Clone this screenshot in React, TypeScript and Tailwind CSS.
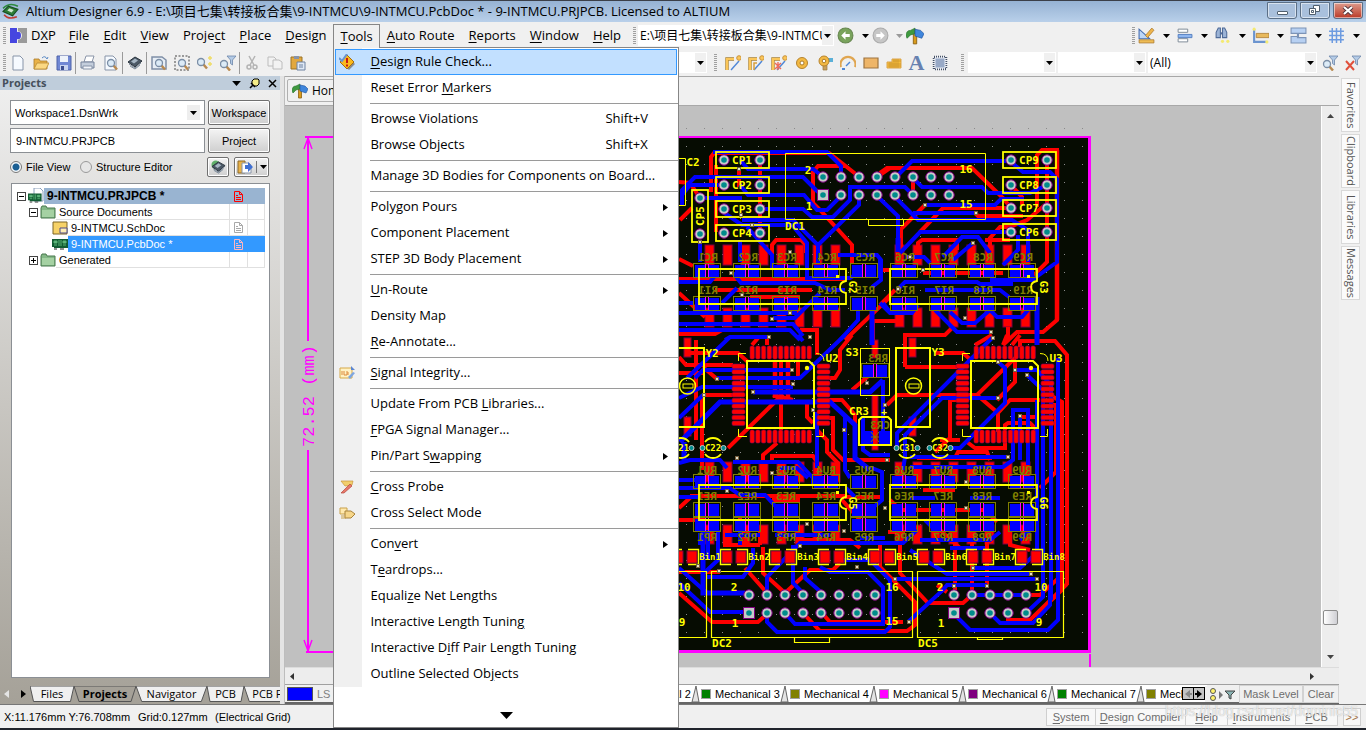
import type { ReactNode } from "react";

const UI = "font-['Open_Sans','Noto_Sans_CJK_SC',sans-serif]";
const SMALL = "font-['Liberation_Sans',Arial,sans-serif] text-[11px] leading-4";

/* ---------- small shared pieces ---------- */

// "&" marks the access key, as in the original menu resources
function Label({ text }: { text: string }) {
  const i = text.indexOf("&");
  if (i < 0) return <>{text}</>;
  return (
    <>
      {text.slice(0, i)}
      <span className="underline underline-offset-2">{text[i + 1]}</span>
      {text.slice(i + 2)}
    </>
  );
}

function Arrow({ className = "" }: { className?: string }) {
  return (
    <svg width="7" height="4" viewBox="0 0 7 4" className={className}>
      <path d="M0 0h7L3.500 4z" fill="currentColor" />
    </svg>
  );
}

function Grip() {
  return (
    <svg width="3" height="17" className="shrink-0">
      {[0, 2, 4, 6, 8, 10, 12, 14, 16].map((y) => (
        <rect key={y} y={y} width="3" height="1" fill="#a0a0a0" />
      ))}
    </svg>
  );
}

function Sep() {
  return <div className="h-[22px] w-px shrink-0 bg-[#9a9a9a]" />;
}

function Icon({ size = 16, children }: { size?: number; children: ReactNode }) {
  return (
    <svg width={size} height={size} viewBox="0 0 16 16" className="shrink-0">
      {children}
    </svg>
  );
}

function ToolButton({ label, wide, children }: { label: string; wide?: boolean; children: ReactNode }) {
  return (
    <button
      type="button"
      aria-label={label}
      className={`flex h-6 shrink-0 items-center justify-center ${wide ? "w-[38px] gap-[8px]" : "w-[23px]"}`}
    >
      {children}
      {wide && <Arrow className="text-black" />}
    </button>
  );
}

function Combo({ label, value, className }: { label: string; value: string; className: string }) {
  return (
    <div className={`relative flex h-[21px] shrink-0 bg-white ${className}`}>
      <select aria-label={label} className="w-full appearance-none bg-transparent px-[2px] text-xs outline-none">
        <option>{value}</option>
      </select>
      <span className="pointer-events-none absolute inset-y-px right-px flex w-[11px] items-center justify-center bg-[#f0f0f0]">
        <Arrow className="text-black" />
      </span>
    </div>
  );
}

/* ---------- icons ---------- */

const lens = (
  <>
    <path d="M10 10l4 4.500" stroke="#b98a50" strokeWidth="2.500" />
    <circle cx="8" cy="8" r="3.500" fill="#dcebf7" stroke="#7b8ea6" strokeWidth="1.300" />
  </>
);
const funnel = <path d="M7 1h9l-3.500 4v5l-2 -1.500V5z" fill="#b4cbe6" stroke="#6c87aa" strokeWidth=".8" />;
const chip = (
  <>
    <path d="M1 7l7-5 7 4-7 6z" fill="#4c5966" stroke="#28323c" />
    <path d="M4 6.500l4-3 3 2-4 3z" fill="#a7b6c4" />
    <path d="M2 9l6 4 6-5M3 11l5 3 5-4" fill="none" stroke="#7c8a99" />
  </>
);
const tree = (
  <>
    <path d="M6.500 5h3v10h-3z" fill="#d99b1c" stroke="#8a6112" strokeWidth=".8" />
    <path d="M0 8q0-5 4-5l4-2v5l-4 1-3 3z" fill="#3f9a3f" stroke="#27702b" strokeWidth=".6" />
    <path d="M8 2l5 1 3 3-2 4-6-2z" fill="#3f86dc" stroke="#1f529c" strokeWidth=".6" />
  </>
);
const track = (
  <>
    <path d="M2 15V4h7" fill="none" stroke="#a98336" strokeWidth="3.400" />
    <path d="M2 15V4h7" fill="none" stroke="#fbc659" strokeWidth="2.200" />
    <path d="M6 15l8-9" stroke="#4e86d6" strokeWidth="1.400" />
    <circle cx="14" cy="3" r="2.300" fill="#fbc659" stroke="#c8923b" />
  </>
);
const board = (
  <>
    <path d="M0 3h16v9H2v-1H0z" fill="#125c33" />
    <path d="M2 5h3v2H2zM7 4v6M9 4v6M11 5h3v2h-3zM2 9h3M11 9h3" fill="#66ba82" stroke="#58b276" />
    <path d="M2 13h3M8 13h4" stroke="#222" />
  </>
);
const folder = (
  <>
    <path d="M1 4l1-2h4l1 2h8v10H1z" fill="#84b886" stroke="#49784e" />
    <path d="M2 6h12v7H2z" fill="#a5d1a3" />
  </>
);

const fileTools: (["sep"] | [string, ReactNode])[] = [
  ["New", <path key="n" d="M3 1h7l3 3v11H3z" fill="#f6faff" stroke="#8794a8" />],
  ["Open", <g key="o"><path d="M1 14V4h5l1 2h7v8z" fill="#e9b248" stroke="#a87a2a" strokeWidth=".8" /><path d="M1 14l3-6h12l-3 6z" fill="#fbd882" stroke="#b98b35" strokeWidth=".8" /><path d="M9 3q3-3 5 1l1-2" fill="none" stroke="#5787c4" /></g>],
  ["Save", <g key="s"><path d="M1 1h14v14H1z" fill="#7188d4" stroke="#4f63a8" /><path d="M4 1h8v6H4z" fill="#eef3fb" /><path d="M4 10h8v5H4z" fill="#c9d4ef" /><path d="M5 11h3v4H5z" fill="#3c4e90" /></g>],
  ["sep"],
  ["Print", <g key="p"><path d="M4 7l2-6h8l-2 6z" fill="#fff" stroke="#8a95a8" /><path d="M1 7h13v6H1z" fill="#c4cedc" stroke="#75829a" /><path d="M3 11h9v3H3z" fill="#f2f5fa" stroke="#8794a8" /></g>],
  ["Print Preview", <g key="v"><path d="M2 1h8l3 3v11H2z" fill="#f6faff" stroke="#8794a8" />{lens}</g>],
  ["sep"],
  ["Devices", <g key="d">{chip}</g>],
  ["sep"],
  ["Fit Document", <g key="f"><path d="M1 2h10l4 3v9H1z" fill="#e7eef6" stroke="#7f8fa6" strokeWidth="1.500" />{lens}</g>],
  ["Fit Area", <g key="a"><path d="M1 1h14v14H1z" fill="none" stroke="#444" strokeDasharray="2 1.500" />{lens}</g>],
  ["Zoom Selected", <g key="z"><g transform="translate(-4 -1)">{lens}</g><path d="M13 1v4M11 3h4M13 7v4M11 9h4" stroke="#eedc67" strokeWidth="1.500" /></g>],
  ["Zoom Filtered", <g key="y"><g transform="translate(-4 1)">{lens}</g>{funnel}</g>],
  ["sep"],
  ["Cut", <g key="c" fill="none" stroke="#b3b3b3" strokeWidth="1.500"><path d="M5 1l5 9M11 1L6 10" /><circle cx="5" cy="12" r="2" /><circle cx="11" cy="12" r="2" /></g>],
  ["Copy", <g key="k" fill="#f2f2f2" stroke="#bcbcbc"><path d="M1 2h6l2 2v7H1z" /><path d="M6 5h6l3 2v7H6z" /></g>],
  ["Paste", <g key="q"><path d="M1 2h11v12H1z" fill="#e2a83e" stroke="#9a7327" /><path d="M4 1h5v3H4z" fill="#8793a8" /><path d="M7 7h8v8H7z" fill="#dfe9f6" stroke="#6f82a0" /><path d="M9 10h4M9 12h4" stroke="#6f82a0" /></g>],
];

const placeTools: [string, ReactNode][] = [
  ["Route", track],
  ["Route Differential", <g key="r">{track}<path d="M6 15V8h3" fill="none" stroke="#d99e3a" strokeWidth="1.500" /></g>],
  ["Route Multiple", <g key="m">{track}<path d="M4 8l6 6M10 8l-6 6M7 7v8" stroke="#ee6b5b" strokeWidth="1.400" /></g>],
  ["Pad", <g key="p"><circle cx="8" cy="8" r="5.500" fill="#f4b942" stroke="#b5832d" /><circle cx="8" cy="8" r="2" fill="#fff" stroke="#a87a2a" /></g>],
  ["Via", <g key="v"><path d="M6 8h4v7H6z" fill="#c9a05c" stroke="#9c7a3e" strokeWidth=".7" /><path d="M10 3h6v4h-6z" fill="#5bb0d8" /><circle cx="7" cy="6" r="5" fill="#f4b942" stroke="#b5832d" /><circle cx="7" cy="6" r="1.800" fill="#fff" stroke="#a87a2a" /></g>],
  ["Arc", <g key="a"><path d="M1 12A7.500 7.500 0 1 1 15 12" fill="none" stroke="#e0a651" strokeWidth="2.200" /><path d="M6 11l4-4" stroke="#4e86d6" strokeWidth="1.400" /><path d="M2 14h3" stroke="#4e86d6" strokeWidth="2" /></g>],
  ["Fill", <path key="f" d="M1 3h14v10H1z" fill="#eeb568" stroke="#9e7440" strokeWidth="1.200" />],
  ["Polygon", <g key="g"><path d="M1 13V7h5V4h9v9z" fill="#f7bd3c" stroke="#dca54b" /><path d="M2 9h13M2 11h13M7 6h8M4 7v6M6 7v6M8 4v9M10 4v9M12 4v9" stroke="#c58d2d" strokeWidth=".6" /></g>],
];

const placeEnd: [string, ReactNode][] = [
  ["Component", <g key="c"><path d="M2 2h12v12H2z" fill="none" stroke="#445168" strokeWidth="2.500" strokeDasharray="1 1" /><path d="M3 3h10v10H3z" fill="#98a9c6" stroke="#e7ecf5" /></g>],
];

const rightTools: [string, ReactNode][] = [
  ["Utilities", <g key="u"><path d="M1 2v9h10z" fill="#bcd6f8" stroke="#426bb0" /><path d="M7 8l6-7 2 2-6 7z" fill="#efb54b" stroke="#a8772c" strokeWidth=".7" /><path d="M1 12h14v3H1z" fill="#eebc55" stroke="#a8772c" strokeWidth=".7" /></g>],
  ["Align", <g key="a" strokeWidth=".9" stroke="#7b8794"><path d="M2 2h9v3H2zM2 11h9v3H2z" fill="#fff" /><path d="M2 7h13v3H2z" fill="#8fb6ef" stroke="#5580c0" /></g>],
  ["Find", <g key="f"><path d="M2 10V5l2-4h2v9zM8 10V1h2l2 4v5z" fill="#9bb3d6" stroke="#4f6b98" /><path d="M6 5h2v2H6z" fill="#4f6b98" /><circle cx="8" cy="13.500" r="1.500" fill="#f4ea72" /><circle cx="13" cy="13.500" r="1.500" fill="#f4ea72" /></g>],
  ["Dimension", <g key="d"><path d="M2 2v12h11" fill="none" stroke="#6b94cf" strokeWidth="2" /><path d="M4 6h12v4H4z" fill="#e8b95c" stroke="#a8772c" strokeWidth=".7" /><circle cx="2" cy="2" r="1.500" fill="#f4ea72" /><circle cx="14" cy="14" r="1.500" fill="#f4ea72" /></g>],
  ["Room", <path key="r" d="M1 1h14v5H7v4h8v5H1V9h7V6H1z" fill="#b7d0f2" stroke="#7c93b6" />],
  ["Grid", <path key="g" d="M4 1v14M8 1v14M12 1v14M1 4h14M1 8h14M1 12h14" stroke="#6d9be0" strokeWidth="1.400" />],
];

const filterIcon = (
  <>
    <g transform="translate(-3 1)">{lens}</g>
    {funnel}
  </>
);

/* ---------- Tools menu ---------- */

type Entry = "-" | { text: string; key?: string; sub?: boolean; icon?: ReactNode; on?: boolean };

const toolsMenu: Entry[] = [
  {
    text: "&Design Rule Check...",
    on: true,
    icon: (
      <>
        <path d="M9 3l7 7-6 6-6-6z" fill="#8b8b8b" />
        <path d="M8 1l7 7-7 7-7-7z" fill="#fbb91b" stroke="#a56e12" />
        <path d="M0 4l3 3 5-7" fill="none" stroke="#6893d2" strokeWidth="2" />
        <path d="M8 4v5M8 10.500v2" stroke="#c51c14" strokeWidth="2" />
      </>
    ),
  },
  { text: "Reset Error &Markers" },
  "-",
  { text: "Browse Violations", key: "Shift+V" },
  { text: "Browse Objects", key: "Shift+X" },
  "-",
  { text: "Manage 3D Bodies for Components on Board..." },
  "-",
  { text: "Polygon Pours", sub: true },
  { text: "Component Placement", sub: true },
  { text: "STEP 3D Body Placement", sub: true },
  "-",
  { text: "&Un-Route", sub: true },
  { text: "Density Map" },
  { text: "&Re-Annotate..." },
  "-",
  {
    text: "&Signal Integrity...",
    icon: (
      <>
        <path d="M1 3h12v10H1z" fill="#fff1c4" stroke="#d6a948" />
        <path d="M3 6v4M5 6v4h3V6M9 10V7" stroke="#dd8a3c" fill="none" />
        <path d="M9 12l5-5 2 1-5 6z" fill="#7ea6e0" />
        <path d="M12 1l4 4h-4z" fill="#5b86d0" />
      </>
    ),
  },
  "-",
  { text: "Update From PCB &Libraries..." },
  { text: "&FPGA Signal Manager..." },
  { text: "Pin/Part S&wapping", sub: true },
  "-",
  {
    text: "&Cross Probe",
    icon: (
      <>
        <path d="M2 2h5l7 0-1 4-7 1z" fill="#f2cf6d" stroke="#c9963c" strokeWidth=".7" />
        <path d="M2 14l9-9 2 2-8 7z" fill="#e8796a" stroke="#b5483d" strokeWidth=".7" />
      </>
    ),
  },
  {
    text: "Cross Select Mode",
    icon: (
      <>
        <path d="M1 3h7v6H1z" fill="#ffe9ae" stroke="#c9a14b" />
        <path d="M6 6h6l4 3-4 4H6z" fill="#f6d68a" stroke="#a8823a" />
        <path d="M2 11h4M2 13h5" stroke="#c9a14b" />
      </>
    ),
  },
  "-",
  { text: "Con&vert", sub: true },
  { text: "T&eardrops..." },
  { text: "Equali&ze Net Lengths" },
  { text: "Interactive Length Tunin&g" },
  { text: "Interactive D&iff Pair Length Tuning" },
  { text: "Outline Selected Ob&jects" },
];

function ToolsMenu() {
  return (
    <div
      role="menu"
      className="absolute left-0 top-full z-20 flex w-[346px] flex-col border border-[#868686] bg-[linear-gradient(90deg,#f0f0f0_28px,#fff_28px)] pt-px"
    >
      {toolsMenu.map((e, i) =>
        e === "-" ? (
          <div key={i} role="separator" className="flex h-[5px] items-center pl-9">
            <div className="h-px w-full bg-[#9a9a9a]" />
          </div>
        ) : (
          <button
            key={i}
            type="button"
            role="menuitem"
            className={`mx-px flex h-[26px] items-center border pr-1 text-left ${
              e.on ? "border-[#3399ff] bg-[#c2e0ff]" : "border-transparent"
            }`}
          >
            <span className="flex w-[34px] pl-[3px]">{e.icon && <Icon>{e.icon}</Icon>}</span>
            <span className="flex-1 whitespace-nowrap">
              <Label text={e.text} />
            </span>
            {e.key && <span className="w-[67px]">{e.key}</span>}
            {e.sub && (
              <svg width="5" height="7" className="mr-1">
                <path d="M0 0v7l5-3.500z" />
              </svg>
            )}
          </button>
        ),
      )}
      <div className="flex h-10 items-center justify-center bg-white pt-4">
        <svg width="13" height="7">
          <path d="M0 0h13L6.500 7z" />
        </svg>
      </div>
    </div>
  );
}

/* ---------- header ---------- */

function TitleBar() {
  const frame = "flex h-[17px] w-[30px] items-center justify-center rounded-b-[3px] border border-[#5b6f86] shadow-[inset_0_0_0_1px_#ffffff88]";
  return (
    <header className="flex h-[22px] items-center border-t border-[#3b3f48] bg-linear-to-b from-[#96b2d3] to-[#b9d0ea] pl-[2px] pr-[3px]">
      <Icon size={17}>
        <path d="M1 5q6-6 14-2" fill="none" stroke="#2c8a3e" strokeWidth="1.500" />
        <path d="M1 8l5-5 9 3-5 6z" fill="#2d7d36" stroke="#174d20" />
        <path d="M5 7l2-2 4 1.500-2 2.500z" fill="#cfe6cf" />
        <path d="M2 11q4 5 12 2" fill="none" stroke="#c23a32" strokeWidth="1.500" />
      </Icon>
      <h1 className="ml-[7px] flex-1 whitespace-nowrap text-[13px]">
        Altium Designer 6.9 - E:\项目七集\转接板合集\9-INTMCU\9-INTMCU.PcbDoc * - 9-INTMCU.PRJPCB. Licensed to ALTIUM
      </h1>
      <div className="flex gap-[3px] self-start pt-px">
        <button type="button" aria-label="Minimize" className={`${frame} bg-[#a9c0dc]`}>
          <span className="mt-1 h-1 w-[11px] rounded-[1px] border border-[#51606f] bg-white" />
        </button>
        <button type="button" aria-label="Restore" className={`${frame} bg-[#a9c0dc]`}>
          <svg width="12" height="11" fill="#fff" stroke="#51606f">
            <path d="M4.500.5h6v6h-6z" />
            <path d="M.5 3.500h6v6h-6z" />
            <path d="M2.500 5.500h2v2h-2z" />
          </svg>
        </button>
        <button type="button" aria-label="Close" className={`${frame} bg-linear-to-b from-[#dd9a8c] to-[#b93524]`}>
          <svg width="12" height="9">
            <path d="M2 1l8 7M10 1L2 8" stroke="#51343a" strokeWidth="4" />
            <path d="M2 1l8 7M10 1L2 8" stroke="#fff" strokeWidth="2.200" />
          </svg>
        </button>
      </div>
    </header>
  );
}

const menusLeft = ["&File", "&Edit", "&View", "Proje&ct", "&Place", "&Design"];
const menusRight = ["&Auto Route", "&Reports", "&Window", "&Help"];

function MenuBar() {
  return (
    <nav className="flex h-[27px] items-center bg-[#f0f0f0] pl-[3px] text-[13px]">
      <Grip />
      <svg width="17" height="15" className="ml-1 shrink-0">
        <path d="M0 0h7v4q4-1 4 3.500T7 11v4H0z" fill="#4646e0" />
        <path d="M8 0h9v15H8v-3q4-1 4-4.500T8 3z" fill="#9a9a9a" />
      </svg>
      <button type="button" className="pl-1 pr-[6px]">
        <Label text="D&XP" />
      </button>
      {menusLeft.map((m) => (
        <button key={m} type="button" className="px-[7px]">
          <Label text={m} />
        </button>
      ))}
      <div className="relative mt-[2px] h-[23px] self-start">
        <button type="button" aria-haspopup="menu" aria-expanded="true" className="relative z-30 h-6 border border-b-0 border-[#868686] bg-[#f0f0f0] px-[6px]">
          <Label text="&Tools" />
        </button>
        <ToolsMenu />
      </div>
      {menusRight.map((m) => (
        <button key={m} type="button" className="px-[7px]">
          <Label text={m} />
        </button>
      ))}
      <div className="ml-[5px]">
        <Grip />
      </div>
      <div className="ml-[2px] flex h-[21px] w-[196px] shrink-0 bg-white">
        <input aria-label="Address" readOnly value="E:\项目七集\转接板合集\9-INTMCU\9-INTMCU.PcbDoc" className="min-w-0 flex-1 bg-transparent pl-[2px] text-xs outline-none" />
        <button type="button" aria-label="Recent locations" className="my-px mr-px flex w-[11px] items-center justify-center bg-[#f0f0f0]">
          <Arrow />
        </button>
      </div>
      <ToolButton label="Back" wide>
        <Icon size={17}>
          <circle cx="8" cy="8" r="7" fill="#79a35c" stroke="#66864f" />
          <path d="M4 8l4-4v2.500h4v3H8V12z" fill="#fff" />
        </Icon>
      </ToolButton>
      <button type="button" aria-label="Forward" className="flex w-[31px] items-center gap-[7px] text-[#999]">
        <Icon size={17}>
          <circle cx="8" cy="8" r="7" fill="#c6c6c6" stroke="#aaa" />
          <path d="M12 8L8 4v2.500H4v3h4V12z" fill="#fff" />
        </Icon>
        <Arrow />
      </button>
      <ToolButton label="Home">
        <Icon size={18}>{tree}</Icon>
      </ToolButton>
      <div className="ml-auto flex items-center pr-[3px]">
        <Grip />
        {rightTools.map(([name, art]) => (
          <ToolButton key={name} label={name} wide>
            <Icon size={17}>{art}</Icon>
          </ToolButton>
        ))}
      </div>
    </nav>
  );
}

function ToolBar() {
  return (
    <div className="flex h-[27px] items-center bg-[#f0f0f0] pl-[3px] pr-[2px]">
      <div className="flex w-[704px] shrink-0 items-center">
        <Grip />
        {fileTools.map((t, i) =>
          t[0] === "sep" ? (
            <Sep key={i} />
          ) : (
            <ToolButton key={i} label={t[0]}>
              <Icon>{t[1]}</Icon>
            </ToolButton>
          ),
        )}
        <Combo label="View configuration" value="" className="ml-auto w-[180px]" />
      </div>
      <div className="ml-[7px] mr-1">
        <Grip />
      </div>
      {placeTools.map(([name, art]) => (
        <ToolButton key={name} label={name}>
          <Icon>{art}</Icon>
        </ToolButton>
      ))}
      <button type="button" aria-label="String" className="w-[23px] shrink-0 font-['Liberation_Serif',serif] text-[22px] font-bold leading-6 text-[#6781b0]">
        A
      </button>
      {placeEnd.map(([name, art]) => (
        <ToolButton key={name} label={name}>
          <Icon>{art}</Icon>
        </ToolButton>
      ))}
      <div className="ml-[10px] mr-1">
        <Grip />
      </div>
      <div className="flex min-w-0 flex-1 gap-[2px]">
        <Combo label="Filter net" value="" className="w-[88px]" />
        <Combo label="Filter component" value="" className="w-[88px]" />
        <Combo label="Filter" value="(All)" className="w-[169px]" />
      </div>
      <ToolButton label="Apply filter">
        <Icon>{filterIcon}</Icon>
      </ToolButton>
      <ToolButton label="Clear filter">
        <Icon>
          {funnel}
          <path d="M1 6l8 9M9 6l-8 9" stroke="#e0503c" strokeWidth="2" />
        </Icon>
      </ToolButton>
    </div>
  );
}

/* ---------- projects panel ---------- */

function DocMark({ color }: { color: string }) {
  return (
    <svg width="9" height="11" fill="none" stroke={color}>
      <path d="M.5.500h5l3 3v7h-8zM5.500.500v3h3M2 4.500h2M2 6.500h5M2 8.500h5" />
    </svg>
  );
}

type Row = { text: string; indent: string; icon: ReactNode; box?: "+" | "-"; mark?: string; tone?: string };

const rows: Row[] = [
  {
    text: "9-INTMCU.PRJPCB *",
    indent: "pl-[5px]",
    box: "-",
    icon: (
      <>
        <path d="M6 0h6l3 3v10H6z" fill="#fff" stroke="#8ba0bc" />
        <g transform="translate(0 3) scale(.85)">{board}</g>
      </>
    ),
    mark: "#ff0000",
    tone: "bg-[#99b4d1] font-bold",
  },
  { text: "Source Documents", indent: "pl-[17px]", box: "-", icon: folder },
  {
    text: "9-INTMCU.SchDoc",
    indent: "pl-10",
    icon: (
      <>
        <path d="M1 2h14v12H1z" fill="#f7d268" stroke="#7d6526" />
        <path d="M8 8h7v5H8z" fill="#ffedb4" stroke="#4d4a8d" />
      </>
    ),
    mark: "#a8a8a8",
  },
  { text: "9-INTMCU.PcbDoc *", indent: "pl-10", icon: board, mark: "#ffb4bc", tone: "bg-[#3399ff] text-white" },
  { text: "Generated", indent: "pl-[17px]", box: "+", icon: folder },
];

function ProjectTree() {
  return (
    <ul role="tree" aria-label="Projects" className="flex-1 border border-[#8b8f94] bg-white pr-1 pt-1">
      {rows.map((r) => (
        <li key={r.text} role="treeitem" className={`flex h-4 items-center ${r.indent}`}>
          {r.box && (
            <span className="mr-[2px] flex h-[9px] w-[9px] shrink-0 items-center justify-center border border-[#444]">
              <svg width="5" height="5">
                <path d={r.box === "+" ? "M0 2.500h5M2.500 0v5" : "M0 2.500h5"} stroke="#000" />
              </svg>
            </span>
          )}
          <Icon>{r.icon}</Icon>
          <span className={`flex h-4 min-w-0 flex-1 items-center ${r.tone ?? "border-b border-[#e0e0e0]"}`}>
            <span className={`flex-1 whitespace-nowrap pl-[3px] ${r.text.endsWith("PRJPCB *") ? "text-xs" : ""}`}>{r.text}</span>
            <span className={`flex h-4 w-[18px] items-center justify-center ${r.tone ? "" : "border-l border-[#e0e0e0]"}`}>
              {r.mark && <DocMark color={r.mark} />}
            </span>
            <span className={`h-4 w-[18px] ${r.tone ? "" : "border-x border-[#e0e0e0]"}`} />
          </span>
        </li>
      ))}
    </ul>
  );
}

const panelTabs = [
  { text: "Files", width: "w-[44px]" },
  { text: "Projects", width: "w-[62px]" },
  { text: "Navigator", width: "w-[71px]" },
  { text: "PCB", width: "w-[37px]" },
  { text: "PCB Filter", width: "w-[66px]" },
];

function ProjectsPanel() {
  const button = "rounded-[2px] border border-[#707070] bg-linear-to-b from-[#f4f4f4] to-[#cfcfcf] shadow-[inset_0_0_0_1px_#fff]";
  return (
    <aside className={`flex w-[280px] shrink-0 flex-col bg-linear-to-b from-[#f0f0f0] to-[#a5a198] ${SMALL}`}>
      <div className="flex h-[14px] items-center bg-[#bfcddb] pl-[2px] pr-[3px]">
        <h2 className={`flex-1 text-[11px] font-bold text-[#46505c] ${UI}`}>Projects</h2>
        <button type="button" aria-label="Panel menu" className="mr-2">
          <Arrow className="h-[5px] w-[9px]" />
        </button>
        <button type="button" aria-label="Pin" className="mr-2">
          <svg width="11" height="11">
            <path d="M5 1h4l1 1v4L8 8H5L3 6V3z" fill="#f4ec88" stroke="#000" />
            <path d="M4 7L1 10M2 5l4 4" stroke="#000" strokeWidth="1.500" />
          </svg>
        </button>
        <button type="button" aria-label="Close panel">
          <svg width="9" height="9">
            <path d="M1 1l7 7M8 1L1 8" stroke="#000" strokeWidth="1.500" />
          </svg>
        </button>
      </div>
      <div className="flex flex-1 flex-col px-[10px] pb-2 pt-[10px]">
        <div className="flex gap-[3px]">
          <div className="relative flex h-[25px] w-[195px] border border-[#8b8f94] bg-white">
            <select aria-label="Workspace" className="w-full appearance-none bg-transparent px-1 text-[11px] outline-none">
              <option>Workspace1.DsnWrk</option>
            </select>
            <span className="pointer-events-none absolute inset-y-1 right-1 flex w-[13px] items-center justify-center bg-[#eee]">
              <Arrow />
            </span>
          </div>
          <button type="button" className={`h-[25px] w-[62px] ${button}`}>
            Workspace
          </button>
        </div>
        <div className="mt-[3px] flex gap-[3px]">
          <input aria-label="Project file" readOnly value="9-INTMCU.PRJPCB" className="h-[25px] w-[195px] border border-[#8b8f94] bg-white px-[5px] outline-none" />
          <button type="button" className={`h-[25px] w-[62px] ${button}`}>
            Project
          </button>
        </div>
        <div className="mt-1 flex h-5 items-center">
          <label className="flex w-[70px] items-center gap-1">
            <input type="radio" name="view" defaultChecked className="h-3 w-3 appearance-none rounded-full border border-[#777] bg-white bg-[radial-gradient(circle,#1a5f94_0_3px,#f4f8fb_4px)]" />
            File View
          </label>
          <label className="flex items-center gap-1">
            <input type="radio" name="view" className="h-3 w-3 appearance-none rounded-full border border-[#999] bg-[#e6e6e6]" />
            Structure Editor
          </label>
          <button type="button" aria-label="Refresh" className={`ml-auto flex h-5 w-[22px] items-center justify-center ${button}`}>
            <Icon size={15}>
              <circle cx="5" cy="5" r="4.500" fill="#5fae6a" />
              {chip}
            </Icon>
          </button>
          <button type="button" aria-label="Open project documents" className={`ml-[5px] mr-px flex h-5 w-[35px] items-center gap-[3px] pl-[2px] ${button}`}>
            <Icon>
              <path d="M1 2h7v12H1z" fill="#e9b248" stroke="#8d6a2a" />
              <path d="M5 4h7l2 2v8H5z" fill="#fff" stroke="#8794a8" />
              <path d="M8 6h3V3l5 5-5 5v-3H8z" fill="#3f70d4" />
            </Icon>
            <span className="h-3 w-px bg-[#777]" />
            <Arrow />
          </button>
        </div>
        <div className="mt-[6px] flex flex-1 flex-col pl-px">
          <ProjectTree />
        </div>
      </div>
      <div className={`flex h-[18px] items-start ${UI}`}>
        <div className="flex w-[30px] shrink-0 items-center justify-between px-1 pt-1">
          <svg width="5" height="8"><path d="M5 0v8L0 4z" fill="#e4e4e4" /></svg>
          <svg width="5" height="8"><path d="M0 0v8l5-4z" /></svg>
        </div>
        <div role="tablist" className="flex min-w-0 flex-1 overflow-hidden">
          {panelTabs.map((t) => (
            <button key={t.text} type="button" role="tab" aria-selected={t.text === "Projects"} className={`relative h-4 shrink-0 ${t.width}`}>
              <svg viewBox="0 0 100 16" preserveAspectRatio="none" className="absolute inset-0 h-full w-full">
                <path d="M0 0L8 15.500H92L100 0z" fill={t.text === "Projects" ? "#a5a198" : "#f0f0f0"} stroke="#555" vectorEffect="non-scaling-stroke" />
              </svg>
              <span className={`relative whitespace-nowrap text-[11px] leading-4 ${t.text === "Projects" ? "font-bold" : ""}`}>{t.text}</span>
            </button>
          ))}
        </div>
      </div>
    </aside>
  );
}

/* ---------- PCB canvas ---------- */

const RED = "#ff0000";
const BLUE = "#0000ff";
const YEL = "#ffff00";
const OLIVE = "#808000";
const PINK = "#ff00ff";

// copper on the top layer
const redTracks = [
  "M711 192V157L714 153H829L857 175M739 168V187M760 163V232M716 165V232M813 205V172L818 166H845M877 177L890 168",
  "M813 203L820 210L852 245V263M679 182L690 183L700 198M680 220L692 208M679 279H845M679 259L693 266M679 293L705 317",
  "M772 255V245L776 240H801L806 245V253M715 290H812M679 334H715L722 330M750 297H800M880 270H890M845 340L890 297M873 340V321H890M800 330H817V345",
  "M880 173L887 168H972L1003 198L1011 208M1037 207V155L1042 150H1057V320L1043 332H1017L1003 345M1047 160V262L1032 277M1011 185L1022 197V205",
  "M1007 208H943L920 232M925 205L901 229V252M975 213L978 216H1023M913 178V195M918 250V243L922 240H957V250M990 250V238L1000 227H1010L1027 220L1045 205",
  "M923 273H1003M880 305L895 290M880 321H898M905 367V335H945L952 328M905 367H957M1008 327V340M925 282H950M985 240H1010",
  "M690 353H738L748 362M679 357L686 365H733M703 367L717 379M703 395H733M679 373H705M798 362V380M781 362V430M773 395L793 400",
  "M728 448L783 394M807 403V417L813 423M752 345L758 338M767 345V335M817 335V355M829 378H835L840 370V350L852 335M829 400H842L855 415V435M852 390L873 372",
  "M829 418H833V450L843 460H890M817 430L827 440V452L838 463V475M763 460V455L777 443M772 462V456H813L817 462M702 395V470M696 340V440",
  "M887 405L897 395H977L1015 358M977 395L998 413V432M935 452L950 438V400H957M936 353H963L972 361M1015 360V382L997 400M998 413L1010 400H1040",
  "M1020 347V341H1055L1067 355V585M1050 395L1062 402V580M1050 405H1056V472L1040 488M1005 430V425L1008 423H1030L1037 430M967 442L975 448H1005V438M940 440H960",
  "M917 458H992M955 458L958 452H987L990 460M880 460H888M975 345L992 335M1003 345L1007 335M1012 345L1020 335M1020 417H1036",
  "M690 496H845M679 520H705M740 512V525M772 500H800M845 497H880M890 500L900 510H985L997 522M923 490H955M679 508L692 496M760 530V545M842 500L860 520",
  "M745 568L767 593M763 547V573L785 593L810 570H833L840 563M679 593L712 622H758L767 614M803 613L820 631H907L915 625V602L880 567V545M822 613L830 622H903",
  "M900 530V573L928 603H963L972 595M955 540V590M972 540V590M987 530V585M1067 584L1030 620H1008V614M1062 575L1040 595H1027M1062 570V590L1035 616",
  "M679 572H720M725 530V545H760M800 540H850L860 548M1010 530V545L1030 550M937 585L947 592M888 532H905M940 530L960 548",
];

// copper on the bottom layer
const blueTracks = [
  "M713 152H827L841 166V176M682 205V190L695 177H803L818 192M740 160L748 169H813L822 176M740 185L748 195H804L817 210H827L841 196M703 198H742",
  "M760 209H803L812 217H833L850 200V187H905L913 195M742 220H793L818 245V264M723 212L742 225H792L807 243V278H850L860 272M859 197V205L818 245",
  "M877 196L898 216V252M838 255H877L881 260V280L872 287M679 282H710L718 272M679 313H797M679 324H793L803 336M679 330H790L800 340M700 240V262M740 240V262",
  "M747 227L772 255V270M773 318H795L820 293M733 273L741 283H815L830 290H845M722 303L737 288M679 303H694M840 340L858 320V310M883 303L890 312M724 185H690L682 195",
  "M895 178L912 161H1010L1023 172H1050L1057 179V262L1032 280H1017M913 178L922 187H982L988 193H1030L1047 185M895 197L918 220H1012L1028 230V262",
  "M925 205H995L1001 199H1024M913 213H976M1007 232H920L900 253M1018 235V250L1003 265M943 257L962 237H978L990 253M953 260L973 243M905 257H924L930 263",
  "M898 289L905 282H977L980 284H1013M925 290H1000L1009 297M880 303L890 313H912L918 305M935 310L957 332H990M950 312L962 323H975L990 310L997 317H1022L1028 310",
  "M880 258V278M990 280H1030M725 340L730 337H770M798 335L803 341M687 378L730 337M695 378L703 370H793M717 378H800L845 335M679 398L702 387H793M679 418L703 395",
  "M817 412V468M845 415V470L850 478M863 418V450L870 455H890M883 380V440M679 463L690 460H720L727 468M733 462H798L813 478V485M872 468L882 472V500L875 506",
  "M679 480H695M679 488H730L740 495H765L777 508M679 497H700M740 530V545M780 468H797L808 478M846 488L855 497",
  "M897 448V433L992 338M905 458V435L942 398H998M948 448H960L1005 403V368L998 362M910 457H1008M910 467H1003L1013 460V410H1028V465M1020 417V460",
  "M1015 370H1037L1051 385V600M1027 375L1043 390V560M1037 400V560M1058 358V540M905 457L903 470M910 498H935M970 498H1000M925 520L935 530",
  "M679 568L707 593M679 583L710 612H748M707 577H743L753 563V548M767 593V577L800 543H903L917 530M793 545V583L803 593M805 567V578L822 593M725 535H760",
  "M820 567L830 572H868L883 587V624H795L785 613M835 560H870L890 580V627L885 632H777L767 622V614M895 579H1037M908 622L943 590L947 585H987",
  "M910 550L947 574H1032M953 613L970 630H1048L1058 620V540M990 613L1000 623H1033L1050 605V590M1027 612L1043 597V540M972 595H1027M973 568H1020L1040 550",
  "M775 535H830M860 538H885M920 540H990L1000 532M1020 540L1030 530M708 530V560M718 530V560L705 572M950 548H985M700 533V545",
];

const thickBlue = "M753 392H870L883 380M680 442L720 402H830L855 425V458L870 470M1037 297V345M872 310V345M703 530V593H745M898 238V252M684 442V460";

const resistorCols = [693, 733, 772, 812, 850, 890, 929, 968, 1008];
const finger = [0, 1, 2, 3, 4, 5, 6, 7];
const pins = [0, 1, 2, 3, 4, 5, 6, 7, 8, 9, 10];

function Mark({ x, y, size = 11, color = YEL, mirror, turn, children }: { x: number; y: number; size?: number; color?: string; mirror?: boolean; turn?: number; children: ReactNode }) {
  const extra = mirror ? " scale(-1 1)" : turn ? ` rotate(${turn})` : "";
  return (
    <text transform={`translate(${x} ${y})${extra}`} textAnchor="middle" dominantBaseline="central" fontSize={size} fontWeight="bold" fill={color}>
      {children}
    </text>
  );
}

function Pad({ x, y, square }: { x: number; y: number; square?: boolean }) {
  return (
    <g>
      {square ? (
        <rect x={x - 5.500} y={y - 5.500} width="11" height="11" fill="#c8c8c8" stroke="#800080" />
      ) : (
        <circle cx={x} cy={y} r="5.200" fill="#c8c8c8" stroke="#800080" />
      )}
      <circle cx={x} cy={y} r="2.800" fill="#008c8c" />
    </g>
  );
}

function Resistor({ x, y }: { x: number; y: number }) {
  return (
    <g>
      <rect x={x + 0.5} y={y + 0.5} width="27" height="14" fill="none" stroke={OLIVE} />
      <rect x={x + 2} y={y + 2} width="10" height="12" fill={BLUE} />
      <rect x={x + 16} y={y + 2} width="10" height="12" fill={BLUE} />
      <path d={`M${x + 12.5} ${y + 1}V${y + 14}M${x + 15.500} ${y + 14}V${y + 1}`} stroke={PINK} />
    </g>
  );
}

function Header({ x, y, n }: { x: number; y: number; n: number }) {
  return (
    <g>
      {finger.slice(0, n).map((i) => (
        <g key={i}>
          <Pad x={x + i * 18} y={y} />
          <Pad x={x + i * 18} y={y + 18} square={i === 0} />
        </g>
      ))}
    </g>
  );
}

function Cap({ x, y, name }: { x: number; y: number; name: string }) {
  return (
    <g>
      <rect x={x} y={y} width="53" height="16" fill="none" stroke={YEL} strokeWidth="1.800" />
      <Pad x={x + 8} y={y + 8} />
      <Pad x={x + 44} y={y + 8} />
      <Mark x={x + 26} y={y + 8}>{name}</Mark>
    </g>
  );
}

function Quad({ x, name }: { x: number; name: string }) {
  return (
    <g>
      <g fill={RED} stroke="#800060" strokeWidth=".6">
        {pins.map((i) => (
          <g key={i}>
            <rect x={x + 3 + i * 5.700} y="346" width="4.400" height="13" rx="1.500" />
            <rect x={x + 3 + i * 5.700} y="430" width="4.400" height="13" rx="1.500" />
            <rect x={x - 15} y={364 + i * 5.700} width="13" height="4.400" rx="1.500" />
            <rect x={x + 70} y={364 + i * 5.700} width="13" height="4.400" rx="1.500" />
          </g>
        ))}
      </g>
      <path d={`M${x} 361H${x + 62}L${x + 67} 366V428H${x}z`} fill="none" stroke={YEL} strokeWidth="2" />
      <path d={`M${x - 8.500} 361V353.500H${x - 1}M${x + 69} 353.500Q${x + 77} 353.500 ${x + 77} 361M${x - 8.500} 429V436.500H${x}M${x + 69} 436.500H${x + 76.500}V429`} fill="none" stroke={YEL} />
      <circle cx={x + 60} cy="368" r="2.200" fill={YEL} />
      <Mark x={x + 85} y={358}>{name}</Mark>
    </g>
  );
}

function Socket({ x, y, name }: { x: number; y: number; name: string }) {
  return (
    <g>
      <path d={`M${x} ${y}h147v12q-6 1 -6 6t6 6v11h-147z`} fill="none" stroke={YEL} strokeWidth="1.800" />
      <rect x={x + 137} y={y + 6} width="3" height="3" fill={YEL} />
      <Mark x={x + 153} y={y + 18} turn={90}>{name}</Mark>
    </g>
  );
}

function Crystal({ x }: { x: number }) {
  return (
    <g fill="none" stroke={YEL}>
      <rect x={x} y="348" width="34" height="79" strokeWidth="2" />
      <circle cx={x + 17.500} cy="386" r="8" strokeWidth="1.500" />
      <rect x={x + 13} y="384" width="10" height="4" />
    </g>
  );
}

function RoundCap({ x, name }: { x: number; name: string }) {
  return (
    <g>
      <path d={`M${x - 8} 442A10 10 0 0 1 ${x + 8} 442M${x - 8} 454A10 10 0 0 0 ${x + 8} 454`} fill="none" stroke={YEL} strokeWidth="1.800" />
      <circle cx={x - 10.500} cy="448" r="2.500" fill="#008c8c" stroke="#c8c8c8" />
      <circle cx={x + 10.500} cy="448" r="2.500" fill="#008c8c" stroke="#c8c8c8" />
      <Mark x={x} y={448} size={9}>{name}</Mark>
    </g>
  );
}

const vias: [number, number][] = [
  [731, 273], [742, 295], [790, 313], [772, 319], [790, 252], [769, 337], [810, 337], [741, 215], [752, 225], [739, 169], [700, 242],
  [925, 205], [976, 213], [973, 243], [910, 257], [923, 270], [898, 289], [965, 318], [991, 332], [993, 338], [717, 379], [753, 392],
  [792, 370], [793, 384], [704, 395], [813, 410], [844, 430], [867, 383], [998, 398], [1015, 370], [1027, 375], [998, 362], [885, 405],
  [1020, 416], [737, 458], [887, 460], [1008, 457], [966, 482], [966, 508], [727, 491], [772, 473], [807, 524], [844, 531], [885, 508],
  [698, 566], [719, 571], [857, 567], [895, 579], [954, 586], [987, 586], [1031, 574], [1037, 579], [973, 568], [909, 622], [800, 546],
];

function Board() {
  return (
    <svg width="1037" height="562" viewBox="285 106 1037 562" className="block max-w-none shrink-0 font-['DejaVu_Sans_Mono',monospace]">
      <defs>
        <pattern id="grid" width="18" height="18" patternUnits="userSpaceOnUse">
          <rect x="2" y="2" width="1" height="1" fill="#8a8a8a" />
        </pattern>
        <clipPath id="outline">
          <rect x="308" y="137" width="781" height="515" />
        </clipPath>
      </defs>
      <rect x="334" y="137" width="755" height="515" fill="#060c02" />
      <rect x="334" y="120" width="754" height="530" fill="url(#grid)" />

      <g clipPath="url(#outline)">
        <g fill={RED} stroke="#800040">
          {[705, 895].map((x) =>
            finger.map((i) => (
              <g key={`${x}-${i}`}>
                <rect x={x + i * 18} y="245" width="9" height="20" />
                <rect x={x + i * 18} y="308" width="9" height="19" />
                <rect x={x + i * 18} y="462" width="9" height="20" />
                <rect x={x + i * 18} y="525" width="9" height="19" />
              </g>
            )),
          )}
          <rect x="684" y="338" width="7" height="19" />
          <rect x="684" y="417" width="7" height="19" />
          <rect x="909" y="338" width="7" height="19" />
          <rect x="909" y="417" width="7" height="19" />
          <rect x="872" y="340" width="6" height="18" />
          <rect x="872" y="395" width="6" height="55" />
        </g>
        <g fill="none" stroke={RED} strokeWidth="4">
          {redTracks.map((d) => <path key={d} d={d} />)}
          <path d="M775 362V398M788 362V398M1057 150V320" strokeWidth="4.500" />
        </g>
        <g fill="none" stroke={BLUE} strokeWidth="4">
          {blueTracks.map((d) => <path key={d} d={d} />)}
          <path d={thickBlue} strokeWidth="5" />
        </g>

        {resistorCols.map((x, i) => (
          <g key={x}>
            <Resistor x={x} y={263} />
            <Resistor x={x} y={296} />
            <Resistor x={x} y={474} />
            <Resistor x={x} y={502} />
            <Resistor x={x} y={517} />
            <Mark x={x + 15} y={257} color={OLIVE} mirror>{`RC${i + 1}`}</Mark>
            <Mark x={x + 15} y={290} color={OLIVE} mirror>{`RI${i + 1}`}</Mark>
            <Mark x={x + 14} y={470} color={OLIVE} mirror>{`RU${i + 1}`}</Mark>
            <Mark x={x + 14} y={496} color={OLIVE} mirror>{`RE${i + 1}`}</Mark>
            <Mark x={x + 14} y={537} color={OLIVE} mirror>{`RP${i + 1}`}</Mark>
          </g>
        ))}

        <Socket x={699} y={269} name="G2" />
        <Socket x={890} y={269} name="G3" />
        <Socket x={699} y={485} name="G5" />
        <Socket x={890} y={485} name="G6" />

        <Cap x={716} y={152} name="CP1" />
        <Cap x={716} y={177} name="CP2" />
        <Cap x={716} y={201} name="CP3" />
        <Cap x={716} y={225} name="CP4" />
        <Cap x={1003} y={152} name="CP9" />
        <Cap x={1003} y={177} name="CP8" />
        <Cap x={1003} y={200} name="CP7" />
        <Cap x={1003} y={224} name="CP6" />
        <rect x="692" y="190" width="16" height="52" fill="none" stroke={YEL} strokeWidth="1.800" />
        <Pad x={700} y={198} />
        <Pad x={700} y={234} />
        <Mark x={700} y={216} turn={-90}>CP5</Mark>
        <path d="M670 158.500H685.500V205.500H670" fill="none" stroke={YEL} />
        <Mark x={693} y={162}>C2</Mark>

        <path d="M785.500 153.500H985.500V219.500H785.500zM868.500 219.500V225.500H903.500V219.500" fill="none" stroke={YEL} />
        <Header x={823} y={177} n={8} />
        <Mark x={808} y={170}>2</Mark>
        <Mark x={809} y={206}>1</Mark>
        <Mark x={966} y={169}>16</Mark>
        <Mark x={966} y={204}>15</Mark>
        <Mark x={795} y={226}>DC1</Mark>

        <Crystal x={670} />
        <Mark x={712} y={353}>Y2</Mark>
        <Crystal x={896} />
        <Mark x={938} y={352}>Y3</Mark>
        <Quad x={747} name="U2" />
        <Quad x={971} name="U3" />
        <RoundCap x={681} name="C21" />
        <RoundCap x={713} name="C22" />
        <RoundCap x={907} name="C31" />
        <RoundCap x={940} name="C32" />

        <rect x="860.500" y="348.500" width="29" height="47" fill="none" stroke={YEL} />
        <Mark x={852} y={352}>S3</Mark>
        <Resistor x={861} y={363} />
        <Mark x={878} y={358} color={OLIVE} mirror>RR3</Mark>
        <rect x="861" y="431" width="12" height="14" fill={BLUE} />
        <rect x="879" y="431" width="12" height="14" fill={BLUE} />
        <path d="M871 432l8 10M879 432l-8 10M871 437h8" stroke={OLIVE} />
        <path d="M859 445V420L862 417H888L891 420V445z" fill="none" stroke={YEL} strokeWidth="2" />
        <Mark x={859} y={411}>CR3</Mark>
        <Mark x={880} y={425} color={OLIVE} mirror>CR3</Mark>
        <Mark x={884} y={411} size={10}>+</Mark>

        {[671, 720, 769, 818, 868, 917, 966, 1015].map((x, i) => (
          <g key={x}>
            <rect x={x + 2} y="551" width="10" height="12" fill={RED} stroke="#800040" />
            <rect x={x + 16} y="551" width="10" height="12" fill={RED} stroke="#800040" />
            <path d={`M${x + 11} 549.500H${x + 0.5}V564.500H${x + 11}M${x + 17} 549.500H${x + 27.5}V564.500H${x + 17}`} fill="none" stroke={YEL} strokeWidth="1.400" />
            <Mark x={x + 39} y={557} size={9}>{`Bin${i + 1}`}</Mark>
          </g>
        ))}

        <path d="M670 571.500H706.500V637.500H670M711.500 571.500H912.500V637.500H711.500zM794.500 637.500V642.500H829.500V637.500M917.500 571.500H1063.500V637.500H917.500zM977.500 637.500V639.500H1002.500V637.500" fill="none" stroke={YEL} strokeWidth="1.200" />
        <Header x={749} y={595} n={8} />
        <Header x={954} y={595} n={5} />
        <Mark x={684} y={587}>10</Mark>
        <Mark x={682} y={622}>9</Mark>
        <Mark x={734} y={587}>2</Mark>
        <Mark x={735} y={623}>1</Mark>
        <Mark x={892} y={587}>16</Mark>
        <Mark x={892} y={621}>15</Mark>
        <Mark x={940} y={587}>2</Mark>
        <Mark x={941} y={623}>1</Mark>
        <Mark x={1041} y={587}>10</Mark>
        <Mark x={1039} y={622}>9</Mark>
        <Mark x={722} y={643}>DC2</Mark>
        <Mark x={928} y={643}>DC5</Mark>

        {vias.map(([x, y]) => (
          <g key={`${x},${y}`}>
            <rect x={x - 2} y={y - 2} width="4" height="4" fill="#77603f" />
            <rect x={x - 1} y={y - 1} width="2" height="2" fill="#e0e0c8" />
          </g>
        ))}
      </g>

      {/* board edge and the height dimension */}
      <g fill="none" stroke={PINK} strokeWidth="2">
        <path d="M305 137H1089M306 652H1089" />
        <path d="M1089.500 136V653M334 651.500H1090" strokeWidth="3" />
        <path d="M1090 654V667M308 138V341M308 450V651" />
        <path d="M308 138L304 149M308 138L312 149M308 138V150M308 651L304 640M308 651L312 640" strokeWidth="1.400" />
      </g>
      <text transform="translate(309 396) rotate(-90)" textAnchor="middle" dominantBaseline="central" fontSize="17" fill={PINK} className="font-['Liberation_Mono',monospace]">
        72.52 (mm)
      </text>
    </svg>
  );
}

/* ---------- document area ---------- */

const layers = [
  { name: "Top Layer", color: "bg-[#ff0000]" },
  { name: "Bottom Layer", color: "bg-[#0000ff]" },
  { name: "Mechanical 1", color: "bg-[#ff00ff]" },
  { name: "Mechanical 2", color: "bg-[#800080]" },
  { name: "Mechanical 3", color: "bg-[#008000]" },
  { name: "Mechanical 4", color: "bg-[#808000]" },
  { name: "Mechanical 5", color: "bg-[#ff00ff]" },
  { name: "Mechanical 6", color: "bg-[#800080]" },
  { name: "Mechanical 7", color: "bg-[#008000]" },
  { name: "Mechanical 8", color: "bg-[#808000]" },
];

function LayerBar() {
  return (
    <div className={`flex h-[20px] items-center border-b-2 border-[#666] border-t border-t-[#a0a0a0] bg-[#f0f0f0] ${SMALL}`}>
      <button type="button" className="flex h-4 w-[54px] shrink-0 items-center gap-1 pl-[2px] text-[#808080]">
        <span className="h-[14px] w-[26px] border border-[#555] bg-[#0000ff]" />
        LS
      </button>
      <div role="tablist" className="flex h-full min-w-0 flex-1 overflow-hidden bg-white">
        {layers.map((l) => (
          <button key={l.name} type="button" role="tab" className="flex w-[89px] shrink-0 items-center whitespace-nowrap">
            <span className={`ml-[6px] mr-1 h-[10px] w-[10px] shrink-0 border border-[#a0a0a0] ${l.color}`} />
            <span className="flex-1 text-left">{l.name}</span>
            <svg width="6" height="17" className="shrink-0 overflow-visible">
              <path d="M1 17L5 1L8 17z" fill="#e4e4e4" stroke="#666" />
            </svg>
          </button>
        ))}
      </div>
      <div className="relative -ml-[25px] flex">
        {["M7 1L2 5l5 4V6h2V4H7z", "M3 1l5 4-5 4V6H1V4h2z"].map((d, i) => (
          <button key={d} type="button" aria-label={i ? "Scroll right" : "Scroll left"} className="-mr-px flex h-[13px] w-[12px] items-center justify-center border border-black bg-[#c4c4c4]">
            <svg width="10" height="10">
              <path d={d} fill={i ? "#000" : "#888"} />
            </svg>
          </button>
        ))}
      </div>
      <svg width="34" height="16" className="ml-px shrink-0 bg-[#f0f0f0]">
        <circle cx="8" cy="5" r="2.500" fill="#fff36a" stroke="#555" />
        <circle cx="8" cy="12" r="2.500" fill="#fff36a" stroke="#555" />
        <path d="M14 5v8l4-4z" fill="#777" />
        <path d="M20 5h10l-4 4v4l-2-1V9z" fill="#8ab4b4" stroke="#444" />
      </svg>
      <button type="button" className="h-[18px] w-[64px] shrink-0 border border-[#d2d2d2] text-[#6d6d6d]">Mask Level</button>
      <button type="button" className="h-[18px] w-[36px] shrink-0 border border-[#d2d2d2] text-[#6d6d6d]">Clear</button>
    </div>
  );
}

function DocumentArea() {
  return (
    <main className="flex min-w-0 flex-1 flex-col border-l border-[#bdbdbd] bg-[#f0f0f0] pr-px">
      <div className="flex h-[30px] items-start border-b border-t border-[#a8a8a8] pl-[2px] pt-[2px]">
        <button type="button" className="flex h-[23px] w-[90px] items-center gap-1 rounded-[2px] border border-[#b0b0b0] pl-1 text-xs">
          <Icon>{tree}</Icon>
          Home
        </button>
      </div>
      <div className="flex min-h-0 flex-1">
        <div className="min-w-0 flex-1 overflow-hidden bg-[#c0c0c0]">
          <Board />
        </div>
        <div className="flex w-[18px] shrink-0 flex-col items-center border-l border-white bg-[#ededed] py-2">
          <svg width="7" height="4"><path d="M0 4h7L3.500 0z" fill="#444" /></svg>
          <div className="mt-auto h-[15px] w-[15px] rounded-[2px] border border-[#8c8c8c] bg-linear-to-r from-white to-[#cfcfd4]" />
          <Arrow className="mt-[30px] text-[#444]" />
        </div>
      </div>
      <div className="flex h-[17px] items-center justify-between border-t border-[#dcdcdc] bg-[#ededed] pl-[5px] pr-[25px]">
        <svg width="4" height="7"><path d="M4 0v7L0 3.500z" fill="#333" /></svg>
        <svg width="4" height="7"><path d="M0 0v7l4-3.500z" fill="#333" /></svg>
      </div>
      <LayerBar />
    </main>
  );
}

function SideTabs() {
  return (
    <aside className="flex w-[26px] shrink-0 flex-col gap-[2px] bg-[#f0f0f0] pl-px pt-[2px]">
      {["Favorites", "Clipboard", "Libraries", "Messages"].map((t) => (
        <button key={t} type="button" className={`h-[54px] w-[19px] border border-[#d9d9d9] bg-[#fbfbfb] text-[11px] leading-4 text-[#555] [writing-mode:vertical-rl] ${UI}`}>
          {t}
        </button>
      ))}
    </aside>
  );
}

const statusButtons = [
  { text: "&System", width: "w-[50px]" },
  { text: "&Design Compiler", width: "w-[91px]" },
  { text: "&Help", width: "w-[43px]" },
  { text: "&Instruments", width: "w-[69px]" },
  { text: "&PCB", width: "w-[43px]" },
];

function StatusBar() {
  return (
    <footer className={`relative flex h-[25px] items-center border-b-2 border-[#20242c] bg-[#f0f0f0] pl-1 pr-[5px] ${SMALL}`}>
      <span className="w-[134px]">X:11.176mm Y:76.708mm</span>
      <span className="w-[77px]">Grid:0.127mm</span>
      <span>(Electrical Grid)</span>
      <div className="ml-auto flex">
        {statusButtons.map((b) => (
          <button key={b.text} type="button" className={`-mr-px h-[18px] border border-[#cfcfcf] bg-[#f8f8f8] text-[#6d6d6d] ${b.width}`}>
            <Label text={b.text} />
          </button>
        ))}
        <button type="button" className="ml-[6px] h-[18px] w-[18px] border border-[#cfcfcf] bg-[#f8f8f8] text-[#a5774c]">&gt;&gt;</button>
      </div>
      <span className="pointer-events-none absolute right-2 -top-1 whitespace-nowrap text-sm text-white/70 [text-shadow:0_0_1px_#aaa]">
        https://blog.csdn.net/dominic55
      </span>
    </footer>
  );
}

export default function App() {
  return (
    <div className={`flex h-screen flex-col overflow-hidden bg-[#f0f0f0] text-black ${UI}`}>
      <TitleBar />
      <MenuBar />
      <ToolBar />
      <div className="flex min-h-0 flex-1 border-b border-[#777]">
        <ProjectsPanel />
        <div className="w-1 shrink-0 bg-[#e4e4e4]" />
        <DocumentArea />
        <SideTabs />
      </div>
      <StatusBar />
    </div>
  );
}
